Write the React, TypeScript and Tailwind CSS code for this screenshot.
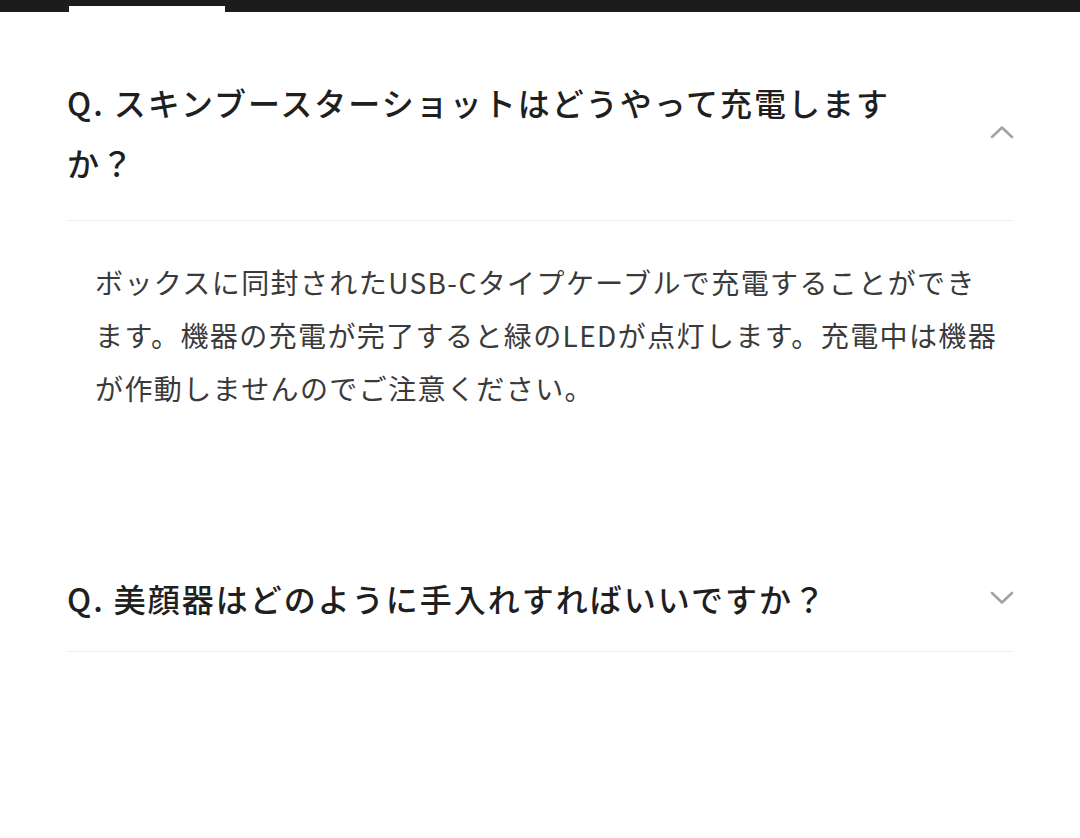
const jp = { fontFamily: '"Noto Sans CJK JP", "Liberation Sans", sans-serif' };

function Chevron({ up }: { up?: boolean }) {
  return (
    <svg width="24" height="14" viewBox="0 0 24 14" className="shrink-0">
      <path
        d={up ? "M2 12 L12 2.5 L22 12" : "M2 2 L12 11.5 L22 2"}
        fill="none"
        stroke="#a3a3a3"
        strokeWidth="2.6"
        strokeLinecap="round"
        strokeLinejoin="round"
      />
    </svg>
  );
}

export default function App() {
  return (
    <div className="w-[1080px] h-[838px] bg-white overflow-hidden" style={jp}>
      {/* top nav strip */}
      <div className="h-[12px] bg-[#1c1c1c] flex items-end">
        <div className="ml-[69px] w-[156px] h-[6px] bg-white" />
      </div>

      <div className="ml-[67px] w-[946px]">
        {/* open item */}
        <div className="pt-[60px] pb-[28px] border-b border-[#ebebeb] flex items-center justify-between">
          <h2 className="w-[850px] text-[32px] leading-[60px] tracking-[2px] text-[#1f1f1f] font-medium">
            Q. スキンブースターショットはどうやって充電しますか？
          </h2>
          <div className="mr-[-1px]">
            <Chevron up />
          </div>
        </div>
        <p className="mt-[35px] pl-[28px] w-[933px] text-[28px] leading-[53px] tracking-[1.4px] text-[#3a3a3a]">
          ボックスに同封されたUSB-Cタイプケーブルで充電することができます。機器の充電が完了すると緑のLEDが点灯します。充電中は機器が作動しませんのでご注意ください。
        </p>

        {/* closed item */}
        <div className="mt-[153px] pb-[23px] border-b border-[#ebebeb] flex items-center justify-between">
          <h2 className="text-[32px] leading-[60px] tracking-[2px] text-[#1f1f1f] font-medium">
            Q. 美顔器はどのように手入れすればいいですか？
          </h2>
          <div className="mr-[-1px]">
            <Chevron />
          </div>
        </div>
      </div>
    </div>
  );
}
